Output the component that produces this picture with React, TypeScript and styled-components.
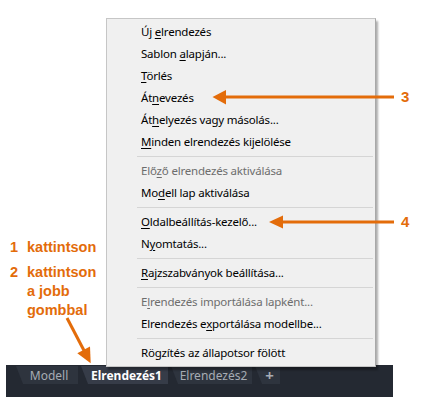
import React from "react";
import styled, { createGlobalStyle } from "styled-components";

const ORANGE = "#e36c0a";

const Global = createGlobalStyle`
  html, body { margin: 0; padding: 0; background: #ffffff; }
  body { font-family: "Noto Sans", "Liberation Sans", sans-serif; }
`;

const Page = styled.div`
  position: relative;
  width: 421px;
  height: 416px;
  overflow: hidden;
  padding-top: 18px;
  box-sizing: border-box;
  background: #ffffff;
`;

const MainRow = styled.div`
  display: flex;
  align-items: flex-start;
  position: relative;
  z-index: 2;
`;

const LeftNotes = styled.div`
  width: 106px;
  flex: none;
  box-sizing: border-box;
  padding: 220px 0 0 10px;
  display: flex;
  flex-direction: column;
  gap: 6px;
`;

const Note = styled.div`
  display: grid;
  grid-template-columns: 17px auto;
  font-family: "Liberation Sans", Arial, sans-serif;
  font-weight: 700;
  font-size: 14.5px;
  line-height: 19px;
  color: ${ORANGE};
`;

const Menu = styled.div`
  width: 270px;
  box-sizing: border-box;
  background: #f0f0f0;
  border: 1px solid #c6c6c6;
  border-right-color: #a8a8a8;
  box-shadow: 2px 3px 2px rgba(0, 0, 0, 0.32);
  padding: 2px 0;
  display: flex;
  flex-direction: column;
`;

const Item = styled.div<{ $disabled?: boolean }>`
  display: block;
  height: 22px;
  line-height: 22px;
  padding-left: 34px;
  font-family: "Noto Sans", "Liberation Sans", sans-serif;
  font-size: 11.5px;
  letter-spacing: -0.2px;
  color: ${(p) => (p.$disabled ? "#6d6d6d" : "#000000")};
  white-space: pre;
`;

const Key = styled.span`
  text-decoration: underline;
  text-underline-offset: 2px;
  text-decoration-thickness: 1px;
`;

const Separator = styled.div`
  height: 1px;
  background: #d5d5d5;
  margin: 3px 2px 3px 30px;
`;

const TabBar = styled.div`
  position: relative;
  z-index: 1;
  margin: -2px 0 0 6px;
  width: 387px;
  height: 32px;
  background: #242932;
  display: flex;
  align-items: flex-start;
  gap: 3px;
  padding: 1px 0 0 10px;
  box-sizing: border-box;
`;

const Tab = styled.div<{ $active?: boolean; $w: number; $plus?: boolean }>`
  width: ${(p) => p.$w}px;
  height: 18px;
  background: ${(p) => (p.$active ? "#363c48" : "#2e343e")};
  clip-path: polygon(0 0, 100% 0, 100% 100%, 7px 100%);
  display: flex;
  align-items: center;
  justify-content: center;
  padding-left: 4px;
  box-sizing: border-box;
  font-family: "Noto Sans", "Liberation Sans", sans-serif;
  font-size: ${(p) => (p.$plus ? "15px" : "12px")};
  font-weight: ${(p) => (p.$active || p.$plus ? 700 : 400)};
  color: ${(p) => (p.$active ? "#ffffff" : "#a7acb4")};
  white-space: nowrap;
`;

const Overlay = styled.svg`
  position: absolute;
  left: 0;
  top: 0;
  z-index: 5;
  pointer-events: none;
`;

const Callout = styled.div<{ $x: number; $y: number }>`
  position: absolute;
  left: ${(p) => p.$x}px;
  top: ${(p) => p.$y}px;
  z-index: 5;
  font-family: "Liberation Sans", Arial, sans-serif;
  font-weight: 700;
  font-size: 15px;
  line-height: 16px;
  color: ${ORANGE};
`;

type Entry =
  | { sep: true }
  | { parts: [string, string, string]; disabled?: boolean };

const entries: Entry[] = [
  { parts: ["Új ", "e", "lrendezés"] },
  { parts: ["Sablon ", "a", "lapján..."] },
  { parts: ["", "T", "örlés"] },
  { parts: ["Át", "n", "evezés"] },
  { parts: ["Át", "h", "elyezés vagy másolás..."] },
  { parts: ["", "M", "inden elrendezés kijelölése"] },
  { sep: true },
  { parts: ["Elő", "z", "ő elrendezés aktiválása"], disabled: true },
  { parts: ["Mo", "d", "ell lap aktiválása"] },
  { sep: true },
  { parts: ["", "O", "ldalbeállítás-kezelő..."] },
  { parts: ["N", "y", "omtatás..."] },
  { sep: true },
  { parts: ["", "R", "ajzszabványok beállítása..."] },
  { sep: true },
  { parts: ["E", "l", "rendezés importálása lapként..."], disabled: true },
  { parts: ["Elrendezés e", "x", "portálása modellbe..."] },
  { sep: true },
  { parts: ["Rögzítés az állapotsor fölött", "", ""] },
];

export default function App() {
  return (
    <>
      <Global />
      <Page>
        <MainRow>
          <LeftNotes>
            <Note>
              <span>1</span>
              <span>kattintson</span>
            </Note>
            <Note>
              <span>2</span>
              <span>
                kattintson
                <br />a jobb
                <br />
                gombbal
              </span>
            </Note>
          </LeftNotes>
          <Menu>
            {entries.map((e, i) =>
              "sep" in e ? (
                <Separator key={i} />
              ) : (
                <Item key={i} $disabled={e.disabled}>
                  {e.parts[0]}
                  {e.parts[1] && <Key>{e.parts[1]}</Key>}
                  {e.parts[2]}
                </Item>
              )
            )}
          </Menu>
        </MainRow>
        <TabBar>
          <Tab $w={62}>Modell</Tab>
          <Tab $w={87} $active>
            Elrendezés1
          </Tab>
          <Tab $w={81}>Elrendezés2</Tab>
          <Tab $w={25} $plus>
            +
          </Tab>
        </TabBar>
        <Overlay width={421} height={416} viewBox="0 0 421 416">
          <g fill={ORANGE} stroke={ORANGE}>
            <line x1={224} y1={97} x2={394} y2={97} strokeWidth={3} />
            <polygon points="212.5,97 226,90 226,104.5" stroke="none" />
            <line x1={281} y1={222} x2={394} y2={222} strokeWidth={3} />
            <polygon points="269,222 283,215.5 283,228.5" stroke="none" />
            <line x1={67} y1={318} x2={84} y2={350.5} strokeWidth={3} />
            <polygon points="90.7,363.3 90,346.5 77.3,353.3" stroke="none" />
          </g>
        </Overlay>
        <Callout $x={401} $y={89}>3</Callout>
        <Callout $x={401} $y={214}>4</Callout>
      </Page>
    </>
  );
}
